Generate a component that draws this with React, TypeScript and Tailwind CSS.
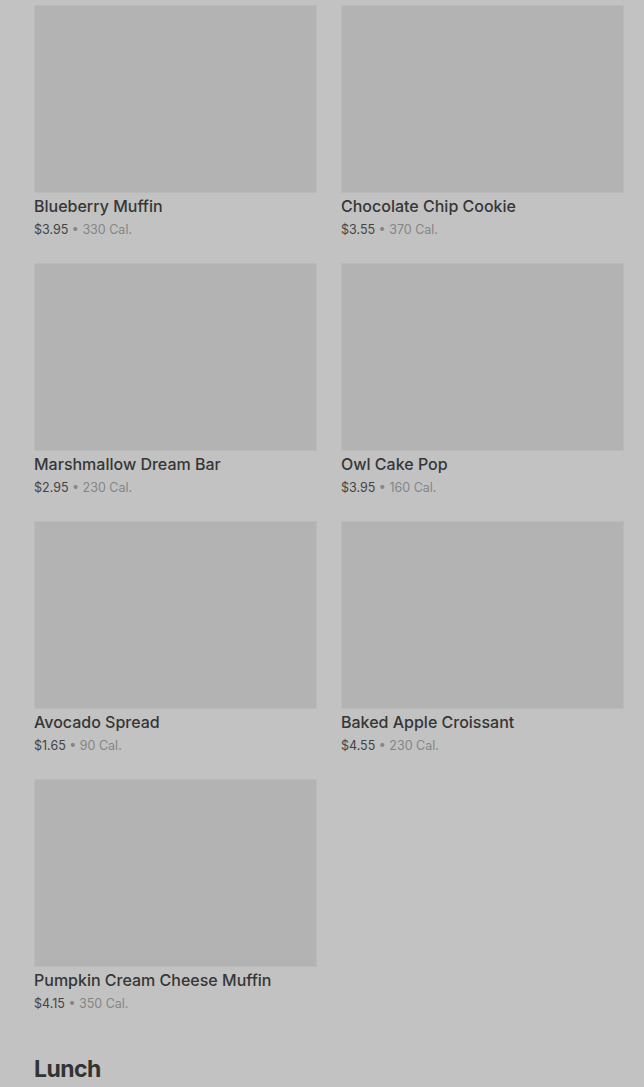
const items = [
  { name: "Blueberry Muffin", price: "$3.95", cal: "330 Cal." },
  { name: "Chocolate Chip Cookie", price: "$3.55", cal: "370 Cal." },
  { name: "Marshmallow Dream Bar", price: "$2.95", cal: "230 Cal." },
  { name: "Owl Cake Pop", price: "$3.95", cal: "160 Cal." },
  { name: "Avocado Spread", price: "$1.65", cal: "90 Cal." },
  { name: "Baked Apple Croissant", price: "$4.55", cal: "230 Cal." },
  { name: "Pumpkin Cream Cheese Muffin", price: "$4.15", cal: "350 Cal." },
];

function MenuCard({ name, price, cal }: { name: string; price: string; cal: string }) {
  return (
    <div className="flex flex-col">
      <div className="h-[188px] border border-[#bababa] bg-[#b3b3b3]" />
      <div className="mt-[2px] text-[16px] leading-[22px] font-medium text-[#363636]">{name}</div>
      <div className="mt-[3px] text-[12.5px] leading-[20px] text-[#444444]">
        {price}
        <span className="text-[#858585]"> • {cal}</span>
      </div>
    </div>
  );
}

export default function App() {
  return (
    <div
      className="min-h-[1087px] bg-[#c2c2c2] pt-[5px] pl-[34px] pr-[20px]"
      style={{ fontFamily: "Inter, 'Noto Sans', sans-serif" }}
    >
      <div className="grid grid-cols-2 gap-x-[24px] gap-y-[23px]">
        {items.map((it) => (
          <MenuCard key={it.name} {...it} />
        ))}
      </div>
      <h2 className="mt-[39px] text-[23px] leading-[32px] font-bold tracking-tight text-[#333333]">Lunch</h2>
    </div>
  );
}
